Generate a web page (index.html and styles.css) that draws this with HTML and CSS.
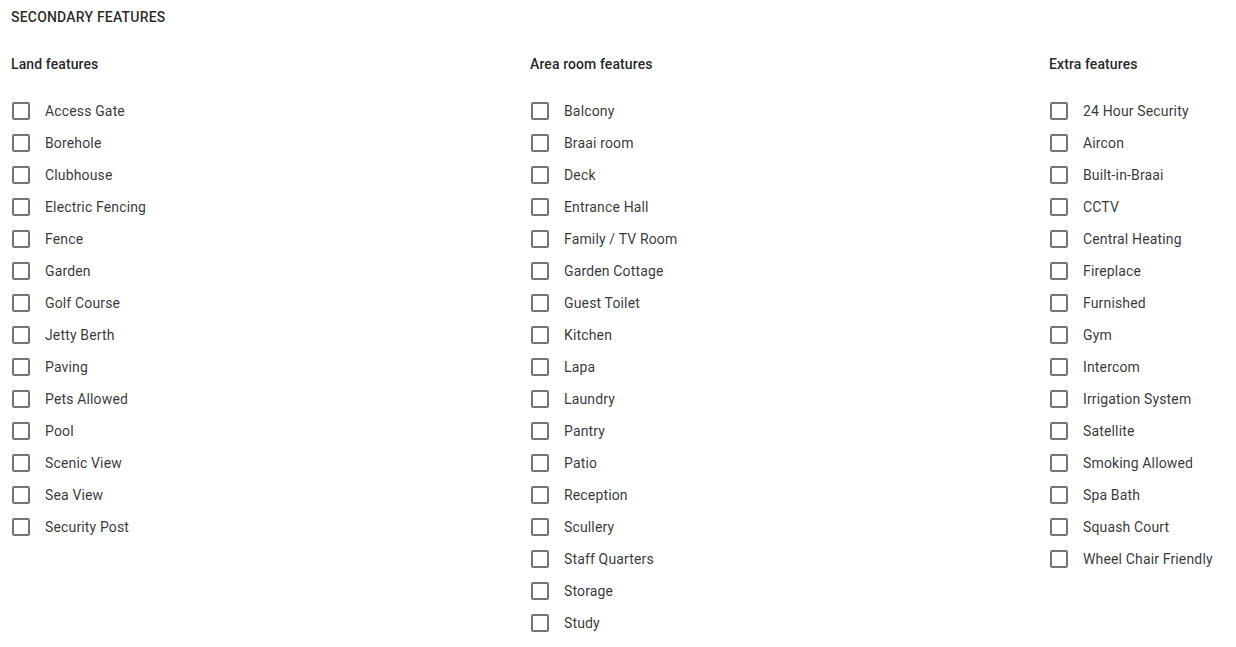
FILE: index.html
```html
<!DOCTYPE html>
<html>
<head>
<meta charset="utf-8">
<link rel="stylesheet" href="styles.css">
</head>
<body>
<div class="page">
  <div class="title">Secondary features</div>
  <div class="columns">
    <div class="col">
      <div class="heading">Land features</div>
      <ul class="list">
        <li class="item"><span class="box"></span><span class="label">Access Gate</span></li>
        <li class="item"><span class="box"></span><span class="label">Borehole</span></li>
        <li class="item"><span class="box"></span><span class="label">Clubhouse</span></li>
        <li class="item"><span class="box"></span><span class="label">Electric Fencing</span></li>
        <li class="item"><span class="box"></span><span class="label">Fence</span></li>
        <li class="item"><span class="box"></span><span class="label">Garden</span></li>
        <li class="item"><span class="box"></span><span class="label">Golf Course</span></li>
        <li class="item"><span class="box"></span><span class="label">Jetty Berth</span></li>
        <li class="item"><span class="box"></span><span class="label">Paving</span></li>
        <li class="item"><span class="box"></span><span class="label">Pets Allowed</span></li>
        <li class="item"><span class="box"></span><span class="label">Pool</span></li>
        <li class="item"><span class="box"></span><span class="label">Scenic View</span></li>
        <li class="item"><span class="box"></span><span class="label">Sea View</span></li>
        <li class="item"><span class="box"></span><span class="label">Security Post</span></li>
      </ul>
    </div>
    <div class="col">
      <div class="heading">Area room features</div>
      <ul class="list">
        <li class="item"><span class="box"></span><span class="label">Balcony</span></li>
        <li class="item"><span class="box"></span><span class="label">Braai room</span></li>
        <li class="item"><span class="box"></span><span class="label">Deck</span></li>
        <li class="item"><span class="box"></span><span class="label">Entrance Hall</span></li>
        <li class="item"><span class="box"></span><span class="label">Family / TV Room</span></li>
        <li class="item"><span class="box"></span><span class="label">Garden Cottage</span></li>
        <li class="item"><span class="box"></span><span class="label">Guest Toilet</span></li>
        <li class="item"><span class="box"></span><span class="label">Kitchen</span></li>
        <li class="item"><span class="box"></span><span class="label">Lapa</span></li>
        <li class="item"><span class="box"></span><span class="label">Laundry</span></li>
        <li class="item"><span class="box"></span><span class="label">Pantry</span></li>
        <li class="item"><span class="box"></span><span class="label">Patio</span></li>
        <li class="item"><span class="box"></span><span class="label">Reception</span></li>
        <li class="item"><span class="box"></span><span class="label">Scullery</span></li>
        <li class="item"><span class="box"></span><span class="label">Staff Quarters</span></li>
        <li class="item"><span class="box"></span><span class="label">Storage</span></li>
        <li class="item"><span class="box"></span><span class="label">Study</span></li>
      </ul>
    </div>
    <div class="col">
      <div class="heading">Extra features</div>
      <ul class="list">
        <li class="item"><span class="box"></span><span class="label">24 Hour Security</span></li>
        <li class="item"><span class="box"></span><span class="label">Aircon</span></li>
        <li class="item"><span class="box"></span><span class="label">Built-in-Braai</span></li>
        <li class="item"><span class="box"></span><span class="label">CCTV</span></li>
        <li class="item"><span class="box"></span><span class="label">Central Heating</span></li>
        <li class="item"><span class="box"></span><span class="label">Fireplace</span></li>
        <li class="item"><span class="box"></span><span class="label">Furnished</span></li>
        <li class="item"><span class="box"></span><span class="label">Gym</span></li>
        <li class="item"><span class="box"></span><span class="label">Intercom</span></li>
        <li class="item"><span class="box"></span><span class="label">Irrigation System</span></li>
        <li class="item"><span class="box"></span><span class="label">Satellite</span></li>
        <li class="item"><span class="box"></span><span class="label">Smoking Allowed</span></li>
        <li class="item"><span class="box"></span><span class="label">Spa Bath</span></li>
        <li class="item"><span class="box"></span><span class="label">Squash Court</span></li>
        <li class="item"><span class="box"></span><span class="label">Wheel Chair Friendly</span></li>
      </ul>
    </div>
  </div>
</div>
</body>
</html>
```

FILE: styles.css
```css
html, body {
  margin: 0;
  padding: 0;
  background: #ffffff;
}
body {
  font-family: Roboto, "Noto Sans", Arial, sans-serif;
  color: rgba(0, 0, 0, 0.87);
  overflow: hidden;
}
.page {
  padding: 9px 0 0 11px;
}
.title {
  font-size: 14px;
  line-height: 16px;
  font-weight: 500;
  text-transform: uppercase;
  letter-spacing: 0.2px;
  color: rgba(0, 0, 0, 0.85);
}
.columns {
  display: grid;
  grid-template-columns: 519px 519px minmax(0, 1fr);
  margin-top: 29px;
}
.heading {
  font-size: 14px;
  line-height: 20px;
  font-weight: 500;
  letter-spacing: 0.1px;
}
.list {
  list-style: none;
  margin: 21px 0 0 0;
  padding: 0;
}
.item {
  display: flex;
  align-items: center;
  height: 32px;
}
.box {
  box-sizing: border-box;
  width: 18px;
  height: 18px;
  margin-left: 1px;
  border: 2px solid rgba(0, 0, 0, 0.54);
  border-radius: 2px;
  flex: none;
}
.label {
  margin-left: 15px;
  font-size: 14px;
  line-height: 20px;
  letter-spacing: 0.15px;
  color: rgba(0, 0, 0, 0.8);
  white-space: nowrap;
}
```
